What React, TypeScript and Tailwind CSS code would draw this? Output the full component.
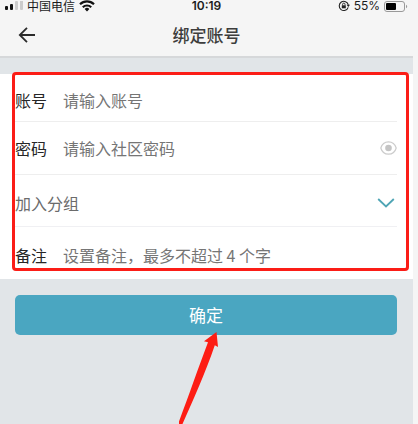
import { useState } from "react";

const groups = ["家人", "朋友", "同事"];

const labelClass = "w-12 shrink-0 text-base leading-6 text-[#262626]";
const inputClass =
  "min-w-0 flex-1 bg-transparent text-base leading-6 text-[#333] outline-none placeholder:text-[#757575]";

function StatusBar() {
  return (
    <div className="grid h-[10px] grid-cols-3 items-center text-xs leading-[10px] text-[#1c1c1c]">
      <div className="flex items-center pl-[5px]">
        <svg width="18" height="10" viewBox="0 0 18 10" aria-hidden="true">
          <rect x="0" y="5" width="3" height="4" rx="1" fill="#111" />
          <rect x="5" y="3" width="3" height="6" rx="1" fill="#111" />
          <rect x="10" y="0" width="3" height="9" rx="1" fill="#ccc" />
          <rect x="15" y="-3" width="3" height="12" rx="1" fill="#ccc" />
        </svg>
        <span className="ml-1 shrink-0">中国电信</span>
        <svg className="ml-1 shrink-0" width="16" height="12" viewBox="0 0 16 12" fill="none" stroke="#111" strokeWidth="2.2" aria-hidden="true">
          <path d="M1 4.2a10 10 0 0 1 14 0" />
          <path d="M3.8 7.2a6 6 0 0 1 8.4 0" />
          <path d="M5.600 9a3.500 3.500 0 0 1 4.800 0L8 11.500z" fill="#111" stroke="none" />
        </svg>
      </div>
      <span className="text-center font-['Inter','Liberation_Sans',sans-serif] font-semibold">10:19</span>
      <div className="flex items-center justify-end pr-[5px]">
        <svg className="mr-1 shrink-0" width="12" height="12" viewBox="0 0 12 12" fill="none" stroke="#222" aria-hidden="true">
          <path d="M10.2 7.4A4.6 4.6 0 1 1 10.3 4.8" strokeWidth="1.1" />
          <path d="M8.6 4.8h3.4l-1.7 2.3z" fill="#222" stroke="none" />
          <rect x="3.8" y="5.3" width="4" height="3" fill="#222" stroke="none" />
          <path d="M4.6 5.4V4.3a1.2 1.2 0 0 1 2.4 0v1.1" strokeWidth="0.9" />
        </svg>
        <span className="font-['Inter','Liberation_Sans',sans-serif]">55%</span>
        <svg className="ml-1 shrink-0" width="24" height="11" viewBox="0 0 24 11" aria-hidden="true">
          <rect x="0.5" y="0.5" width="20" height="10" rx="2.5" fill="none" stroke="#999" />
          <rect x="2" y="2" width="10" height="7" rx="1" fill="#000" />
          <path d="M22 3.8c1.6.6 1.6 2.8 0 3.4z" fill="#999" />
        </svg>
      </div>
    </div>
  );
}

function Header() {
  return (
    <header className="grid h-12 grid-cols-[48px_1fr_48px] items-center border-b-2 border-[#d6d8da] pb-1">
      <button type="button" aria-label="返回" className="flex h-10 items-center pl-[18px] pt-2">
        <svg width="18" height="16" viewBox="0 0 18 16" fill="none" stroke="#2b2b2b" strokeWidth="1.8" aria-hidden="true">
          <path d="M9 .8 1.8 8 9 15.2M1.8 8H17" />
        </svg>
      </button>
      <h1 className="pt-2 text-center text-[17px] font-medium leading-6 text-[#3d3d3d]">绑定账号</h1>
    </header>
  );
}

export default function App() {
  const [visible, setVisible] = useState(false);

  return (
    <div className="min-h-screen overflow-hidden bg-[#f5f5f5] pr-[5px] font-['Noto_Sans_CJK_SC',sans-serif]">
      <StatusBar />
      <Header />

      <form
        className="flex min-h-[366px] flex-col bg-[#e1e5e8] pt-4"
        onSubmit={(e) => e.preventDefault()}
      >
        <div className="relative bg-white pl-[15px] pr-4">
          <div className="flex h-12 items-center border-b border-[#eee] pt-1">
            <label htmlFor="account" className={labelClass}>账号</label>
            <input id="account" type="text" placeholder="请输入账号" className={inputClass} />
          </div>
          <div className="flex h-[53px] items-center border-b border-[#eee]">
            <label htmlFor="password" className={labelClass}>密码</label>
            <input
              id="password"
              type={visible ? "text" : "password"}
              placeholder="请输入社区密码"
              className={inputClass}
            />
            <button type="button" aria-label="显示密码" onClick={() => setVisible(!visible)}>
              <svg width="17" height="14" viewBox="0 0 17 14" fill="none" aria-hidden="true">
                <path d="M.8 7C2 2.800 5 .8 8.500 .8S15 2.800 16.200 7c-1.200 4.200-4.200 6.200-7.700 6.200S2 11.200 .8 7z" stroke="#ccc" strokeWidth="1.2" />
                <circle cx="8.500" cy="7" r="3.300" fill="#c4c4c4" />
              </svg>
            </button>
          </div>
          <div className="relative flex h-[52px] items-center border-b border-[#f0f0f3] pt-1">
            <select
              aria-label="加入分组"
              defaultValue=""
              className="w-full appearance-none bg-transparent text-base leading-6 text-[#6b6b6b] outline-none"
            >
              <option value="" disabled>加入分组</option>
              {groups.map((g) => (
                <option key={g}>{g}</option>
              ))}
            </select>
            <svg className="pointer-events-none absolute right-[2px]" width="18" height="10" viewBox="0 0 18 10" fill="none" stroke="#4fa5b5" strokeWidth="1.8" aria-hidden="true">
              <path d="M1.200 1 9 8.500 16.800 1" />
            </svg>
          </div>
          <div className="flex h-[52px] items-center pt-1">
            <label htmlFor="remark" className={labelClass}>备注</label>
            <input id="remark" type="text" placeholder="设置备注，最多不超过 4 个字" className={inputClass} />
          </div>

          {/* Highlight frame around the fields */}
          <div className="pointer-events-none absolute -top-[2px] bottom-2 left-3 right-1 rounded border-[3px] border-[#fb1d17]" />
        </div>

        <div className="relative pb-4 pl-[15px] pr-4 pt-4">
          <button type="submit" className="h-10 w-full rounded-[5px] bg-[#4aa6c1] text-[17px] leading-6 text-white">
            确定
          </button>
          {/* Pointer towards the submit button */}
          <svg className="pointer-events-none absolute left-1/2 top-[53px] -ml-7" width="40" height="92" viewBox="0 0 40 92" aria-hidden="true">
            <path d="M37.500 0 25 9.300l4 1C20 34 9 66-1 92h4.500C14 68 26 42 35.800 13.200l3.200 1.800z" fill="#fd1d14" />
          </svg>
        </div>
      </form>
    </div>
  );
}
